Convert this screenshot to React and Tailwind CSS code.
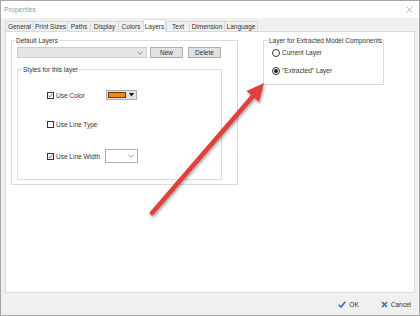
import React from "react";

const tabs = [
    { label: "General", w: "w-[28px]" },
    { label: "Print Sizes", w: "w-[34px]" },
    { label: "Paths", w: "w-[23px]" },
    { label: "Display", w: "w-[28px]" },
    { label: "Colors", w: "w-[25px]" },
    { label: "Layers", w: "w-[23px]", active: true },
    { label: "Text", w: "w-[23px]" },
    { label: "Dimension", w: "w-[35px]" },
    { label: "Language", w: "w-[34px]" },
];

const CheckBox = ({ checked }) => (
    <span className="w-[7px] h-[7px] border border-[#333] bg-white flex items-center justify-center shrink-0">
        {checked && (
            <svg width="7" height="7" viewBox="0 0 7 7">
                <path d="M1 3.6 L2.8 5.3 L6 1.4" fill="none" stroke="#222" strokeWidth="0.9" />
            </svg>
        )}
    </span>
);

const Radio = ({ checked }) => (
    <span className="w-[8px] h-[8px] rounded-full border border-[#333] bg-white flex items-center justify-center shrink-0">
        {checked && <span className="w-[4px] h-[4px] rounded-full bg-[#222]" />}
    </span>
);

const Chevron = () => (
    <svg width="6" height="4" viewBox="0 0 6 4">
        <path d="M0.5 0.8 L3 3.2 L5.5 0.8" fill="none" stroke="#777" strokeWidth="0.8" />
    </svg>
);

const App = () => {
    return (
        <div className="relative w-[420px] h-[316px] border border-[#a6a6a6] bg-[#f0f0f0] flex flex-col font-['Liberation_Sans',Arial,sans-serif] text-[6.5px] leading-[9px] text-[#333] whitespace-nowrap overflow-hidden">
            {/* title bar */}
            <div className="h-[17px] bg-white flex items-center justify-between pl-[3px] pr-[6px]">
                <span className="text-[#999] text-[7px]">Properties</span>
                <svg width="7" height="7" viewBox="0 0 7 7">
                    <path d="M0.5 0.5 L6.5 6.5 M6.5 0.5 L0.5 6.5" stroke="#999" strokeWidth="0.7" />
                </svg>
            </div>

            {/* tabs */}
            <div className="h-[13px] flex items-end pl-[4px]">
                {tabs.map((t) => (
                    <div
                        key={t.label}
                        className={
                            t.active
                                ? `${t.w} h-[13px] bg-white border border-b-0 border-[#d9d9d9] flex items-center justify-center -mb-px relative z-10`
                                : `${t.w} h-[10px] border-t border-l border-[#d9d9d9] flex items-center justify-center last:border-r`
                        }
                    >
                        {t.label}
                    </div>
                ))}
            </div>

            {/* page */}
            <div className="mx-[4px] h-[262px] bg-white border border-[#d9d9d9] flex items-start pl-[5px] pt-[4px] gap-[25px]">
                <fieldset className="w-[227px] h-[149px] border border-[#dcdcdc]">
                    <legend className="ml-[3px] px-[1px]">Default Layers</legend>
                    <div className="px-[5px]">
                        <div className="flex items-center mt-[2px]">
                            <div className="w-[130px] h-[11px] bg-[#e6e6e6] border border-[#cccccc] flex items-center justify-end pr-[3px]">
                                <Chevron />
                            </div>
                            <div className="ml-[3px] w-[33px] h-[11px] bg-[#e1e1e1] border border-[#adadad] flex items-center justify-center">
                                New
                            </div>
                            <div className="ml-[5px] w-[33px] h-[11px] bg-[#e1e1e1] border border-[#adadad] flex items-center justify-center">
                                Delete
                            </div>
                        </div>

                        <fieldset className="mt-[7px] w-[205px] h-[115px] border border-[#dcdcdc]">
                            <legend className="ml-[4px] px-[1px]">Styles for this layer</legend>
                            <div className="pl-[29px]">
                                <div className="mt-[16px] h-[10px] flex items-center">
                                    <CheckBox checked />
                                    <span className="ml-[2px] w-[50px]">Use Color</span>
                                    <div className="w-[31px] h-[10px] bg-[#e1e1e1] border border-[#adadad] flex items-center pl-[1px]">
                                        <span className="w-[18px] h-[6px] bg-[#f5870f] border border-[#5a3a10]" />
                                        <svg width="8" height="4" viewBox="0 0 8 4" className="ml-[2px]">
                                            <path d="M1 0 L6 0 L3.5 3.5 Z" fill="#111" />
                                        </svg>
                                    </div>
                                </div>
                                <div className="mt-[19px] h-[10px] flex items-center">
                                    <CheckBox />
                                    <span className="ml-[2px]">Use Line Type</span>
                                </div>
                                <div className="mt-[20px] h-[14px] flex items-center">
                                    <CheckBox checked />
                                    <span className="ml-[2px] w-[49px]">Use Line Width</span>
                                    <div className="w-[33px] h-[14px] bg-white border border-[#adadad] flex items-center justify-end pr-[3px]">
                                        <Chevron />
                                    </div>
                                </div>
                            </div>
                        </fieldset>
                    </div>
                </fieldset>

                <fieldset className="w-[120px] h-[49px] border border-[#dcdcdc]">
                    <legend className="ml-[4px] px-[1px]">Layer for Extracted Model Components</legend>
                    <div className="pl-[8px]">
                        <div className="mt-[3px] h-[9px] flex items-center">
                            <Radio />
                            <span className="ml-[2px]">Current Layer</span>
                        </div>
                        <div className="mt-[9px] h-[9px] flex items-center">
                            <Radio checked />
                            <span className="ml-[2px]">"Extracted" Layer</span>
                        </div>
                    </div>
                </fieldset>
            </div>

            {/* bottom bar */}
            <div className="flex-1 flex items-center justify-end pr-[8px] pt-[1px]">
                <div className="flex items-center">
                    <svg width="8" height="7" viewBox="0 0 8 7">
                        <path d="M0.8 3.8 L3 6 L7.3 0.8" fill="none" stroke="#2a6fc9" strokeWidth="1.6" />
                    </svg>
                    <span className="ml-[3px]">OK</span>
                </div>
                <div className="flex items-center ml-[22px]">
                    <svg width="7" height="7" viewBox="0 0 7 7">
                        <path d="M1 1 L6 6 M6 1 L1 6" stroke="#2a6fc9" strokeWidth="1.6" />
                    </svg>
                    <span className="ml-[3px]">Cancel</span>
                </div>
            </div>

            {/* red annotation arrow */}
            <svg
                className="absolute left-0 top-0 pointer-events-none drop-shadow-[1px_2px_1.5px_rgba(0,0,0,0.35)]"
                width="420"
                height="316"
                viewBox="0 0 420 316"
            >
                <line x1="151" y1="212" x2="252" y2="95" stroke="#e2403c" strokeWidth="4.5" strokeLinecap="round" />
                <polygon points="263,82 258,101 245.5,90" fill="#e2403c" />
            </svg>
        </div>
    );
};

export default App;
